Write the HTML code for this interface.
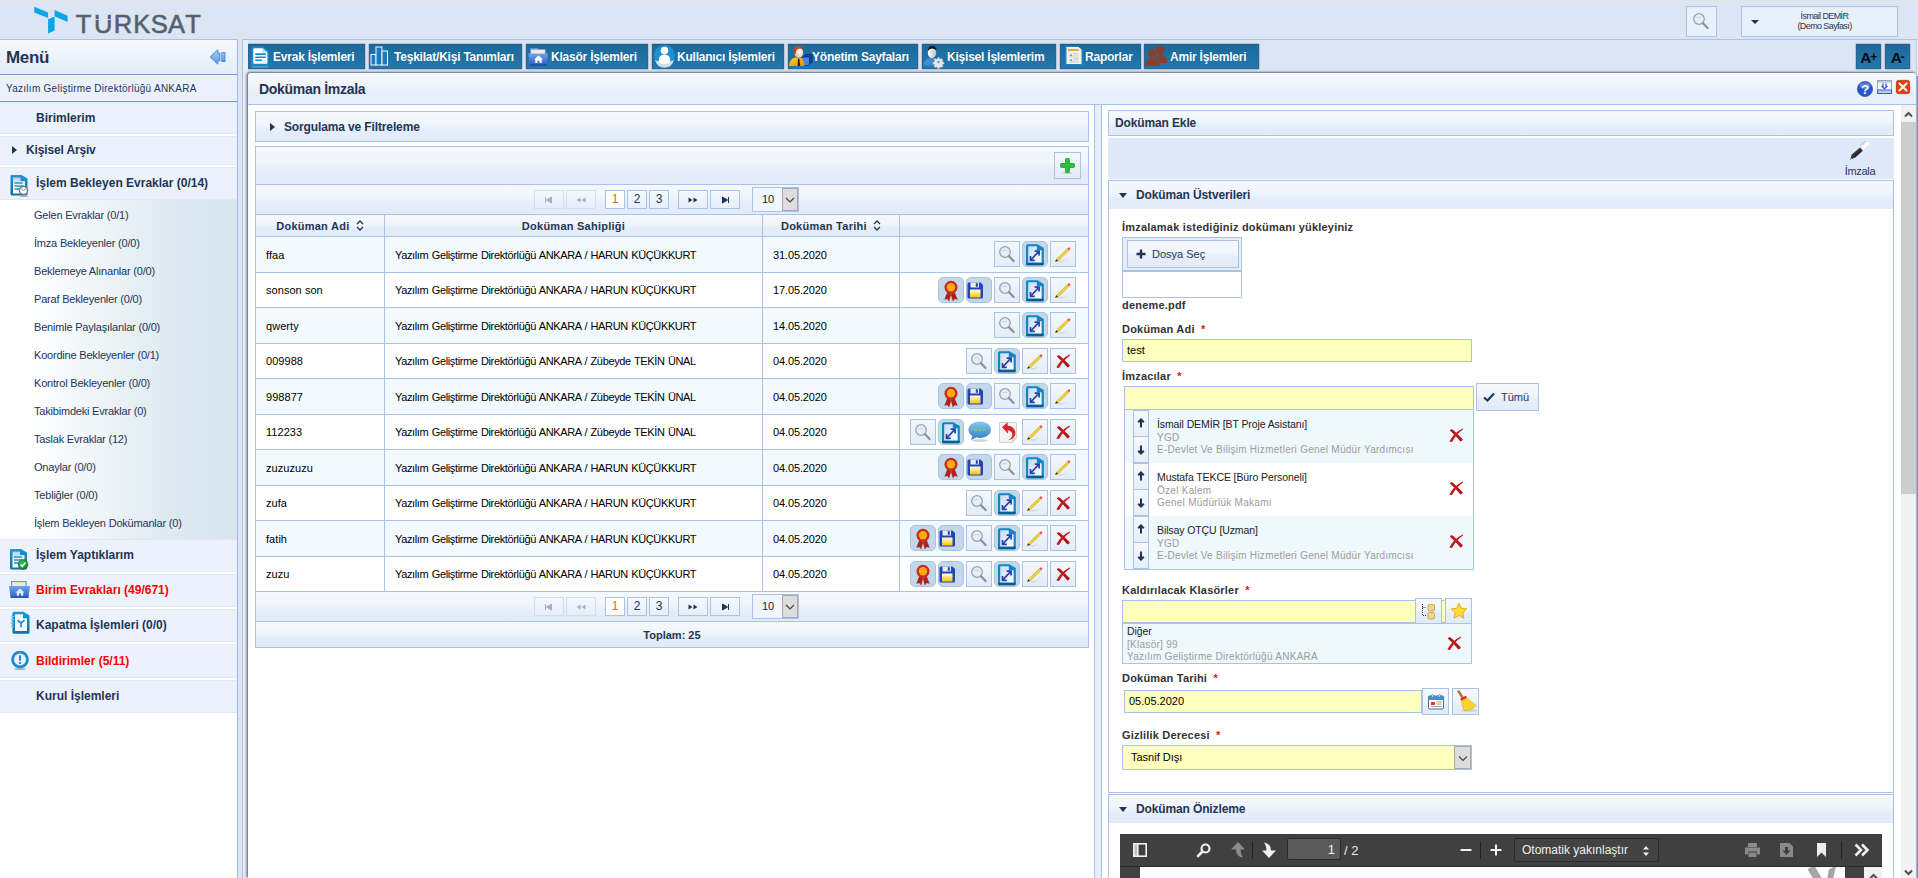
<!DOCTYPE html>
<html lang="tr">
<head>
<meta charset="utf-8">
<title>Doküman İmzala</title>
<style>

*{box-sizing:border-box;margin:0;padding:0}
html,body{width:1918px;height:878px;overflow:hidden;background:#dbe5f3;
 font-family:"Liberation Sans",Arial,sans-serif;font-size:11px;color:#000}
.abs{position:absolute}
svg{display:block;overflow:visible}
/* ---------- top header ---------- */
#top{position:absolute;left:0;top:0;width:1918px;height:40px;background:#dbe5f3;border-top:1px solid #e3e3e3}
#logo{position:absolute;left:33px;top:4px}
#logotxt{position:absolute;left:73.750px;top:8px;font-size:25.500px;color:#53616e;line-height:30px;font-weight:400;white-space:nowrap;-webkit-text-stroke:.55px #53616e}
#logotxt span{display:inline-block;text-align:center}
#srch{position:absolute;left:1686px;top:5px;width:31px;height:31px;border:1px solid #a9c3e6;background:#e8f0fa}
#usr{position:absolute;left:1741px;top:5px;width:157px;height:31px;border:1px solid #a9c3e6;background:#e8f0fa;
 font-size:9px;line-height:10px;text-align:center;color:#1f3556;padding:4px 0 0 10px;letter-spacing:-.6px}
#usr:before{content:"";position:absolute;left:9px;top:13px;border:4px solid transparent;border-top:4px solid #1f3556}
/* ---------- sidebar ---------- */
#side{position:absolute;left:0;top:39px;width:238px;height:839px;background:#fff;border-right:1px solid #9dbbe2;border-top:1px solid #a9c3e6}
#side .hd{height:35px;background:linear-gradient(#f5f8fc,#eef4fb 40%,#e4ecf8);border-bottom:1px solid #6f9cd9;
 font-weight:bold;font-size:17px;line-height:35px;padding-left:6px;letter-spacing:-.3px;color:#1f3556;position:relative}
#side .unit{height:27px;background:#eaf1fb;border-bottom:1px solid #6f9cd9;font-size:10px;line-height:27px;padding-left:6px;color:#1f3556;letter-spacing:.27px}
.acc{position:absolute;left:0;width:237px;height:33px;background:#ebf2fc;font-weight:bold;font-size:12px;line-height:31px;color:#1f3556;
 padding-left:36px;border-top:1px solid #e4e6f4;border-bottom:1px solid #e4e6f4;white-space:nowrap}
.acc.red{color:#f00}
.acc svg{position:absolute;left:8px;top:6px}
#sub{position:absolute;left:0;top:160px;width:237px;height:339px;background:linear-gradient(90deg,#fff 12%,#dbe8ef 78%,#d7e5ed)}
#sub div{position:absolute;left:34px;font-size:11px;color:#1f3556;line-height:14px;white-space:nowrap;letter-spacing:-.2px}
#split1{position:absolute;left:238px;top:39px;width:5px;height:839px;background:#dbe5f3;border-right:1px solid #a9c3e6}
#gap1{position:absolute;left:243px;top:39px;width:5px;height:839px;background:#e9f0fa;border-top:1px solid #a9c3e6}
/* ---------- menubar ---------- */
#mbar{position:absolute;left:243px;top:39px;width:1674px;height:34px;background:#dbe5f3;border-top:1px solid #a9c3e6;border-left:1px solid #e9f0fa}
.mb{position:absolute;top:44px;height:25px;background:linear-gradient(#1d6999,#2278ae);border:1px solid #2b6592;border-top-color:#265a84;box-shadow:0 0 1.500px rgba(50,70,100,.75);text-shadow:0 0 1px rgba(0,20,40,.3);color:#fff;font-weight:bold;font-size:12px;
 line-height:24px;white-space:nowrap;letter-spacing:-.22px}
.mb svg{position:absolute;left:-1px;top:-1px}
.mb span{position:absolute;top:0}
/* ---------- main panel ---------- */
#panel{position:absolute;left:248px;top:73px;width:1669px;height:805px;border-right:1px solid #9ab3da;background:#fff;border-radius:3px 4px 0 0;box-shadow:-1px -1px 2px rgba(60,75,100,.7),-2px 0 3px rgba(60,75,100,.35)}
#ptitle{position:absolute;left:0;top:0;width:100%;height:32px;background:linear-gradient(#f4f8fc,#f0f5fb 40%,#e6eef9 64%,#e9f0fa);border-bottom:1px solid #a9c3e6;
 font-weight:bold;font-size:14px;line-height:32px;padding-left:11px;color:#1f3556;letter-spacing:-.3px;border-radius:3px 4px 0 0}
.bx{position:absolute;border:1px solid #a9c3e6}
.grad{background:linear-gradient(#f5f8fc,#f1f6fc 40%,#e4edf9 64%,#e2ecf8)}
.b12{font-weight:bold;font-size:12px;color:#1f3556;letter-spacing:-.13px}

.tri-r{position:absolute;border:4px solid transparent;border-left:5px solid #1f3556;width:0;height:0}
.tri-d{position:absolute;border:4px solid transparent;border-top:5px solid #1f3556;width:0;height:0}
.ab{display:inline-block;width:26px;height:26px;border:1px solid #a9c3e6;background:linear-gradient(#f4f8fd,#e3ecf8);margin-left:2px;vertical-align:top}
.ab svg{margin:-1px 0 0 -1px}
.ab.dk{background:#c3d7e8;border-radius:5px;border-color:#a9c3e6}
.ab.no{background:none;border-color:transparent}
.pg{position:absolute;left:7px;width:834px;height:31px;border:1px solid #a9c3e6;background:linear-gradient(#f5f8fc,#f1f6fc 40%,#e4edf9 64%,#e2ecf8)}
.pb{position:absolute;top:5px;height:19px;border:1px solid #a9c3e6;background:linear-gradient(#f6f9fd,#e6eef9);text-align:center;font-size:12px;line-height:17px;color:#1f3556}
.pb.dis{border-color:#c9d9ee;opacity:.75}
.pb.cur{color:#e17009;background:#fff}
.psel{position:absolute;left:496px;top:2px;width:47px;height:25px;border:1px solid #a9c3e6;background:#f1f6fc;font-size:11px;line-height:23px;padding-left:9px;color:#222}
.psel i{position:absolute;right:0;top:0;width:16px;height:23px;background:#ddd;border:1px solid #a8a8a8}
.psel i svg{margin:1px 0 0 0}
.th{position:absolute;left:7px;width:834px;height:23px;border:1px solid #a9c3e6;background:linear-gradient(#f5f8fc,#f1f6fc 40%,#e4edf9 64%,#e2ecf8);font-weight:bold;font-size:11px;color:#1f3556;letter-spacing:.25px;text-align:center;line-height:23px}
.th div,.tr div{position:absolute;top:0;height:100%;border-right:1px solid #a9c3e6;white-space:nowrap}
.c1{left:0;width:129px}.c2{left:129px;width:378px}.c3{left:507px;width:137px}.c4{left:644px;width:188px;border-right:0 !important}
.srt{display:inline-block;vertical-align:-1px;margin-left:3px}
.tr{position:absolute;left:7px;width:834px;border:1px solid #a9c3e6;border-top:0;font-size:11px;color:#000;line-height:35px;letter-spacing:-.28px}
.tr.odd{background:#f2fafd}.tr.even{background:#fff}
.tr .c1,.tr .c2,.tr .c3{padding-left:10px}
.tr .c4{text-align:right;padding:4px 12px 0 0;line-height:0}
.tr .c3{letter-spacing:-.12px}
.tr .c1{letter-spacing:.05px}
.tr .c2{letter-spacing:-.36px;word-spacing:.65px}
.tot{font-weight:bold;font-size:11px;color:#1f3556;text-align:center;line-height:27px}
#split2{position:absolute;left:846px;top:32px;width:8px;height:773px;background:#e6eefa;border-left:1px solid #a9c3e6;border-right:1px solid #a9c3e6}

.lb{position:absolute;font-weight:bold;font-size:11px;color:#333;letter-spacing:.2px;line-height:14px;white-space:nowrap}
.st{color:#e8101a;font-weight:bold;margin-left:3px}
.inp{position:absolute;border:1px solid #a9c3e6;background:#ffffc0;font-size:11px;line-height:21px;padding-left:4px;color:#000;white-space:nowrap}
.dd{position:absolute;right:0;top:0;width:17px;height:23px;background:#ddd;border:1px solid #a8a8a8}
.dd svg{margin:1px 0 0 1px}
.sg{position:absolute;left:1125px;width:348px;height:53px}
.ud{position:absolute;left:8px;width:16px;height:27px;border:1px solid #a9c3e6;background:linear-gradient(#f6f9fd,#e6eef9)}
.n1,.n2,.n3{position:absolute;left:32px;white-space:nowrap;font-size:10px;line-height:13px}
.n1{top:8px;color:#222;font-size:10.500px;letter-spacing:-.1px}
.n2{top:21px;color:#9c9c9c;letter-spacing:.28px}
.n3{top:33px;color:#9c9c9c;letter-spacing:.28px}
.rx{position:absolute;left:323px;top:17px}
#pdf{position:absolute;left:1120px;top:834px;width:762px;height:44px;overflow:hidden}
#pdft{position:absolute;left:0;top:0;width:762px;height:33px;background:#404040;border-bottom:1px solid #2a2a2a;font-family:"Liberation Sans","DejaVu Sans",sans-serif}
#sb{position:absolute;left:1901px;top:105px;width:15px;height:773px;background:#f1f1f1}

.mb.ap{text-align:center;font-size:15.500px;color:#050a10;letter-spacing:-.5px;text-shadow:none;line-height:24px;transform-origin:50% 50%}
.mb.ap small{font-size:12px;vertical-align:2px;margin-left:-.5px}

</style>
</head>
<body>

<svg width="0" height="0" style="position:absolute">
<defs>
<linearGradient id="gBlue" x1="0" y1="0" x2="0" y2="1"><stop offset="0" stop-color="#7fb6ea"/><stop offset="1" stop-color="#2a6fc4"/></linearGradient>
<linearGradient id="gPaper" x1="0" y1="0" x2="1" y2="1"><stop offset="0" stop-color="#c9daf2"/><stop offset="1" stop-color="#ffffff"/></linearGradient>
<linearGradient id="gYel" x1="0" y1="0" x2="0" y2="1"><stop offset="0" stop-color="#fffbe0"/><stop offset="1" stop-color="#f7c600"/></linearGradient>
<linearGradient id="gBub" x1="0" y1="0" x2="0" y2="1"><stop offset="0" stop-color="#8cc6ee"/><stop offset="1" stop-color="#2c7fc0"/></linearGradient>
<symbol id="i-mag" viewBox="0 0 26 26"><circle cx="11" cy="11" r="5.3" fill="#e3eef9" stroke="#9aa2ab" stroke-width="1.3"/><path d="M8.2 9.6h4.6" stroke="#c9d3de" stroke-width="1"/><path d="M15 15.2l4.6 4.8" stroke="#8a9097" stroke-width="2.2" stroke-linecap="round"/></symbol>
<symbol id="i-exp" viewBox="0 0 26 26"><path d="M4 4.800Q4 3.300 5.500 3.300H15.500l6.300 3.700V22.700Q21.800 24.300 20.200 24.300H5.600Q4 24.300 4 22.700z" fill="#0f86c6"/><path d="M4 21.800h17.800v.9q0 1.600-1.600 1.600H5.600Q4 24.300 4 22.700z" fill="#0a5f92"/><path d="M6.200 5.300h8.600v3.900h4.800V21.500H6.200z" fill="url(#gPaper)"/><path d="M8.800 19l8-8.600M8.500 15V19.300h4.300M12.600 10.100h4.500v4.500" fill="none" stroke="#2e3fa8" stroke-width="1.700"/></symbol>
<symbol id="i-pen" viewBox="0 0 26 26"><path d="M6 21l12-2.2-7 3.2z" fill="#cfd6de" opacity=".8"/><path d="M5.2 20.6l1.3-2.4L17.4 7.6l1.7 1.7L8 20z" fill="#f2d23c" stroke="#c9a51c" stroke-width=".6"/><path d="M17.4 7.6l1-1q.9-.5 1.6.2t.2 1.500l-1.100 1z" fill="#ee4a5a"/><path d="M5.200 20.600l1.300-2.400 1.5 1.800z" fill="#222"/></symbol>
<symbol id="i-x" viewBox="0 0 26 26"><path d="M6.800 8.600Q8.200 6.600 10 7.800L19.800 17.200Q19.600 19 17.400 19.600Q12.500 13.500 6.800 8.600z" fill="#b5161b"/><path d="M19.600 6.400Q20.400 6.800 20 7.600Q13.500 12 9.200 19.800Q7.600 20.200 6.400 19.200Q10.500 11 19.600 6.400z" fill="#c01c22"/></symbol>
<symbol id="i-ros" viewBox="0 0 26 26"><path d="M9.600 14.500l-3.300 8.300 3-.8 1.800 2.500 2.200-7.500zM16.400 14.500l3.300 8.300-3-.8-1.800 2.500-2.200-7.500z" fill="#b0201f"/><circle cx="13" cy="10.300" r="6.500" fill="#c62a23"/><circle cx="13" cy="10.300" r="4.200" fill="#ffab0f"/></symbol>
<symbol id="i-sav" viewBox="0 0 26 26"><path d="M1.500 7q0-1.500 1.500-1.500h11.500l2.500 2.500V20q0 1.500-1.500 1.500H3q-1.500 0-1.500-1.500z" fill="#2443b8"/><rect x="4.500" y="5.500" width="8.500" height="5" fill="#e8ecf5"/><rect x="9.800" y="6.200" width="2" height="3.600" fill="#2443b8"/><rect x="4" y="12.500" width="10.500" height="8" fill="url(#gYel)"/></symbol>
<symbol id="i-bub" viewBox="0 0 26 26"><ellipse cx="14" cy="21.500" rx="8" ry="1.300" fill="#9aa4b0" opacity=".5"/><path d="M13.800 2.500c6.400 0 11.200 3.600 11.200 8.200s-4.800 8.200-11.200 8.200c-1.300 0-2.500-.1-3.600-.4L5 21l1.400-4C3.800 15.500 2.400 13.200 2.400 10.700 2.400 6.100 7.400 2.500 13.800 2.500z" fill="url(#gBub)"/><circle cx="9.500" cy="11" r="1.100" fill="#7ddc3a"/><circle cx="13.800" cy="11" r="1.100" fill="#7ddc3a"/><circle cx="18" cy="11" r="1.100" fill="#7ddc3a"/></symbol>
<symbol id="i-und" viewBox="0 0 26 26"><path d="M5.500 3.500h17v16l-4 4h-13z" fill="#f4f4f4" stroke="#c8c8c8" stroke-width=".8"/><path d="M18.500 23.500v-4h4" fill="#e0e0e0" stroke="#c8c8c8" stroke-width=".8"/><path d="M8 8.300l5.500-5 .3 3.400c5 .4 8.300 4 7.600 8.300-.5 3.200-3.400 5.500-7.400 6.300 3-1.600 4.600-3.800 4.300-6.200-.3-2.300-2-3.700-4.500-3.900l.3 3.600z" fill="#e0242c"/></symbol>
<symbol id="i-plus" viewBox="0 0 27 27"><ellipse cx="13.500" cy="21" rx="5" ry=".8" fill="#8a949e" opacity=".5"/><path d="M11.500 7.500q0-1 1-1h2q1 0 1 1v4h4q1 0 1 1v2q0 1-1 1h-4v4q0 1-1 1h-2q-1 0-1-1v-4h-4q-1 0-1-1v-2q0-1 1-1h4z" fill="#2fbf3a" stroke="#1e9a28" stroke-width=".8"/></symbol>

<linearGradient id="gFold" x1="0" y1="0" x2="0" y2="1"><stop offset="0" stop-color="#6fa4ee"/><stop offset="1" stop-color="#2c5fc8"/></linearGradient>
<linearGradient id="gHair" x1="0" y1="0" x2="1" y2="1"><stop offset="0" stop-color="#e05a18"/><stop offset="1" stop-color="#8a2a08"/></linearGradient>
<radialGradient id="gFace" cx=".6" cy=".4" r=".7"><stop offset="0" stop-color="#fff"/><stop offset="1" stop-color="#f1b48a"/></radialGradient>
<linearGradient id="gShirt" x1="0" y1="0" x2="1" y2="1"><stop offset="0" stop-color="#ffd21a"/><stop offset="1" stop-color="#e88a08"/></linearGradient>
<linearGradient id="gGrayP" x1="0" y1="0" x2="1" y2="0"><stop offset="0" stop-color="#fff"/><stop offset="1" stop-color="#b9c0c8"/></linearGradient>
<symbol id="m-doc" viewBox="0 0 25 25"><path d="M3.200 5q0-2.700 2.700-2.700h8.600l6.400 4.500V20q0 2.600-2.600 2.600H5.800q-2.600 0-2.600-2.600z" fill="#1a8fd2" opacity=".75"/><path d="M3.800 22.900h16.500" stroke="#9cc0da" stroke-width=".7"/><path d="M5.300 5.300q0-1 1-1h8.200l4.900 4.200v10.300q0 1-1 1H6.300q-1 0-1-1z" fill="#fff"/><path d="M14.500 4.300v4.200h4.900z" fill="#bfdcf0"/><path d="M7.200 10.100h10.600M7.200 13.200h10.600M7.200 16.200h6.800" stroke="#1a8fd2" stroke-width="1.600"/></symbol>
<symbol id="m-bar" viewBox="0 0 25 25"><rect x="2" y="10.500" width="5" height="10.500" fill="#1b79c2" stroke="#f4f8fc" stroke-width="1"/><rect x="7" y="3" width="6" height="18" fill="#1b79c2" stroke="#f4f8fc" stroke-width="1"/><rect x="13" y="7" width="5.500" height="14" fill="#1b79c2" stroke="#f4f8fc" stroke-width="1"/></symbol>
<symbol id="m-fold" viewBox="0 0 25 25"><path d="M4 4h8l1 1.500h6.500v6H4z" fill="#5b8fe6"/><rect x="5" y="5.800" width="14" height="7" fill="#f4f0e0" stroke="#c8c2a8" stroke-width=".5"/><path d="M2.300 9.500h19.700l-1.300 11.500H3.600z" fill="url(#gFold)"/><path d="M3.600 20.500h17.100l-.1.900H3.700z" fill="#1a3a8a"/><path d="M12.500 11.500l4.500 4h-1.300v3.500h-2.200v-2.500h-2v2.500H9.300v-3.500H8z" fill="#fff"/></symbol>
<symbol id="m-user" viewBox="0 0 25 25"><circle cx="12.500" cy="11.500" r="10.500" fill="#1e8fcf"/><path d="M3 16q9.500 6 19 0-2 7.500-9.500 7.800Q5 23.500 3 16z" fill="#e9f1f7" opacity=".85"/><circle cx="12.500" cy="6.500" r="3.800" fill="#fff"/><path d="M6.500 17.500q0-7 6-7t6 7q-1.500 2.500-6 2.500t-6-2.500z" fill="#fff"/></symbol>
<symbol id="m-mgr" viewBox="0 0 25 25"><rect x="16.500" y="10.500" width="7.500" height="8.500" rx="1" fill="#1d3fa8" stroke="#0c1f5a" stroke-width=".7"/><rect x="14" y="13" width="7.500" height="8.500" rx="1" fill="#3f86e8" stroke="#0c1f5a" stroke-width=".7"/><path d="M1 22q.5-7 6-8.500l6.500.5q2.500 1.500 3 8z" fill="url(#gShirt)"/><path d="M10 14.500l1.300 0 .9 7.500h-2.500z" fill="#2a1a08"/><ellipse cx="10.800" cy="8.500" rx="4.300" ry="5.300" fill="url(#gFace)"/><path d="M5.500 9q-.8-6.500 5-7 4.500-.2 5 3.500-3-1.500-5.500-.5-2.500 1-2.500 5.500z" fill="url(#gHair)"/></symbol>
<symbol id="m-pers" viewBox="0 0 25 25"><path d="M1.500 21.500q0-6 6-7.500h5q3 1 4 3.500l-2 4z" fill="#3a8fd0"/><ellipse cx="10" cy="8.500" rx="4.200" ry="5.500" fill="url(#gGrayP)"/><path d="M5.800 7q.2-5 4.400-5 4 0 4.300 4.500-2-2-4.500-2t-4.200 2.500z" fill="#111"/><g transform="translate(16.500,18)"><path d="M-1-5.500h2l.4 1.500 1.300.6 1.400-.8 1.400 1.400-.8 1.400.6 1.300 1.500.4v2l-1.500.4-.6 1.300.8 1.400-1.400 1.400-1.400-.8-1.300.6-.4 1.500h-2l-.4-1.500-1.300-.6-1.400.8-1.400-1.400.8-1.400-.6-1.300-1.500-.4v-2l1.500-.4.6-1.300-.8-1.400 1.400-1.400 1.400.8 1.300-.6z" fill="#e6e8ea" stroke="#a8acb2" stroke-width=".5" transform="scale(.82)"/><circle r="1.200" fill="#5a9ad8"/></g></symbol>
<symbol id="m-rep" viewBox="0 0 25 25"><path d="M5 2h13.500l4.500 3.500V21H5z" fill="#1a8fd2" opacity=".7"/><path d="M6.500 3h12l3 2.500V20h-15z" fill="#f3f1ec"/><rect x="8" y="5" width="10.500" height="2" fill="#f5a623"/><path d="M11 9.500l1.500 2.500h-3zM11 14.500l1.500 2.500h-3z" fill="#58a6e6"/><path d="M13.500 9.500h5M13.500 11h5M9 13h9.500M13.500 14.500h5M13.500 16h5M9 18h9.500" stroke="#c8c8c8" stroke-width=".8"/></symbol>
<symbol id="m-amir" viewBox="0 0 25 25"><circle cx="16" cy="6.500" r="4.500" fill="#8a3f2a"/><path d="M8.500 19q0-7.500 7.500-8 7.500.5 7.500 8z" fill="#8a3f2a"/><circle cx="8.500" cy="9.500" r="4.800" fill="#8a3f2a" stroke="#1f6fa4" stroke-width=".8"/><path d="M.5 22q0-8 8-8.500 8 .5 8 8.500z" fill="#8a3f2a" stroke="#1f6fa4" stroke-width=".8"/></symbol>

<linearGradient id="gDocB" x1="0" y1="0" x2="0" y2="1"><stop offset="0" stop-color="#1a96d6"/><stop offset="1" stop-color="#0f6fa8"/></linearGradient>
<linearGradient id="gPap2" x1="0" y1="0" x2="0" y2="1"><stop offset="0" stop-color="#b9cfe8"/><stop offset=".6" stop-color="#fff"/></linearGradient>
<radialGradient id="gGreen" cx=".4" cy=".35" r=".7"><stop offset="0" stop-color="#3cc05a"/><stop offset="1" stop-color="#0a7a2a"/></radialGradient>
<symbol id="s-doc" viewBox="0 0 24 26"><path d="M2 3q0-1 1-1h10l6 3.500V21q0 1.500-1.500 1.500H3.500Q2 22.500 2 21z" fill="url(#gDocB)"/><path d="M4.500 4.500h7.500v3.500h4.500V20.500H4.500z" fill="url(#gPap2)"/><path d="M6 10h8M6 13h9M6 16h6" stroke="#1a96d6" stroke-width="1.500"/></symbol>
<symbol id="s-wait" viewBox="0 0 24 26"><g transform="translate(0.5,-1)"><use href="#s-doc"/><ellipse cx="15.500" cy="23.300" rx="4.500" ry=".8" fill="#8a8f95" opacity=".6"/><circle cx="15" cy="17.500" r="4.800" fill="#6f7f88"/><circle cx="15" cy="17.500" r="3.300" fill="#fff"/><path d="M12.800 15.800l2.200 1.700 2.200-1.700" fill="none" stroke="#6f7f88" stroke-width="1"/></g></symbol>
<symbol id="s-done" viewBox="0 0 24 26"><use href="#s-doc"/><circle cx="15" cy="17.500" r="5" fill="url(#gGreen)" stroke="#0a6a22" stroke-width=".5"/><path d="M12.500 17.500l1.800 2 3.200-4" fill="none" stroke="#fff" stroke-width="1.500"/></symbol>
<symbol id="s-birim" viewBox="0 0 24 26"><g transform="translate(0,-5)"><path d="M3 4h15.500v8H3z" fill="#4f86e0"/><rect x="4" y="6" width="13.500" height="6" fill="#ece8dc" stroke="#c9c4b2" stroke-width=".5"/><path d="M1 10h21l-1.500 11.500H2.500z" fill="url(#gFold)"/><path d="M2.500 20.800h18.100l-.1 1H2.600z" fill="#1c3f8f"/><path d="M12 12.500l4.500 4h-1.300v3.300H13v-2.300h-2v2.300H8.800v-3.300H7.500z" fill="#dfe9fb"/></g></symbol>
<symbol id="s-kap" viewBox="0 0 24 26"><g transform="translate(1,-1.5) scale(1,1.08)"><path d="M3.500 3.500q0-1.500 1.500-1.500h9.500l6 3.500V21q0 1.500-1.500 1.500H5q-1.500 0-1.500-1.500z" fill="url(#gDocB)"/><path d="M6 4.500h8v3.500h4V20H6z" fill="#f4f8fc"/><path d="M2 6.500h3M2 9.500h3M2 12.500h3M2 15.500h3" stroke="#1a96d6" stroke-width="1.200"/><path d="M2 6.500h3M2 9.500h3M2 12.500h3M2 15.500h3" stroke="#fff" stroke-width=".5"/><path d="M8.500 10l3.500 2.500v4M12 12.500l3.500-2.500" fill="none" stroke="#1a8fd0" stroke-width="1.700"/></g></symbol>
<symbol id="s-bil" viewBox="0 0 24 26"><g transform="translate(0.5,-4)"><ellipse cx="11.500" cy="22" rx="6" ry="1" fill="#7d8790" opacity=".6"/><circle cx="11.500" cy="12.500" r="8.800" fill="#1a8fd0"/><circle cx="11.500" cy="12.500" r="6" fill="#e9f2fa"/><path d="M11.500 8.200v5.500" stroke="#1a7fc0" stroke-width="1.800"/><circle cx="11.500" cy="16.200" r="1.100" fill="#1a7fc0"/></g></symbol>
</defs>
</svg>


<div id="top">
 <svg id="logo" width="36" height="29" viewBox="33 5 36 29"><path d="M34.300 6.700L48.100 12.400V17.900L34.300 12.400zM48.100 19.200L54.600 16.600V30.400L48.100 33.500zM54.600 10.100L67.600 15.800V22.100L54.600 16.300z" fill="#0ba5e8"/></svg>
 <div id="logotxt"><span style="width:19.5px">T</span><span style="width:19.9px">Ü</span><span style="width:19.55px">R</span><span style="width:17.95px">K</span><span style="width:17.33px">S</span><span style="width:17.0px">A</span><span style="width:16.4px">T</span></div>
 <div class="abs" style="left:94px;top:5px;width:18px;height:8.300px;background:#dbe5f3"></div><div class="abs" style="left:94px;top:18px;width:18px;height:1px;background:rgba(219,229,243,.75)"></div>
 <div id="srch"><svg width="28" height="28"><use href="#i-mag" transform="translate(1,1)" width="26" height="26"/></svg></div>
 <div id="usr">İsmail DEMİR<br>(Demo Sayfası)</div>
</div>
<div id="mbar"></div><div class="abs" style="left:1916px;top:40px;width:1px;height:33px;background:#b4cbea"></div><div class="abs" style="left:1917px;top:40px;width:1px;height:36px;background:#e8eef8"></div><div class="abs" style="left:1917px;top:76px;width:1px;height:802px;background:#7a96c0"></div>
<div class="mb" style="left:248px;width:117px"><svg width="25" height="25"><use href="#m-doc" width="25" height="25"/></svg><span style="left:24px">Evrak İşlemleri</span></div><div class="mb" style="left:369px;width:153px"><svg width="25" height="25"><use href="#m-bar" width="25" height="25"/></svg><span style="left:24px">Teşkilat/Kişi Tanımları</span></div><div class="mb" style="left:526px;width:122px"><svg width="25" height="25"><use href="#m-fold" width="25" height="25"/></svg><span style="left:24px">Klasör İşlemleri</span></div><div class="mb" style="left:652px;width:132px"><svg width="25" height="25"><use href="#m-user" width="25" height="25"/></svg><span style="left:24px">Kullanıcı İşlemleri</span></div><div class="mb" style="left:788px;width:130px"><svg width="25" height="25"><use href="#m-mgr" width="25" height="25"/></svg><span style="left:23px">Yönetim Sayfaları</span></div><div class="mb" style="left:922px;width:134px"><svg width="25" height="25"><use href="#m-pers" width="25" height="25"/></svg><span style="left:24px">Kişisel İşlemlerim</span></div><div class="mb" style="left:1060px;width:81px"><svg width="25" height="25"><use href="#m-rep" width="25" height="25"/></svg><span style="left:24px">Raporlar</span></div><div class="mb" style="left:1144px;width:115px"><svg width="25" height="25"><use href="#m-amir" width="25" height="25"/></svg><span style="left:25px">Amir İşlemleri</span></div>
<div class="mb ap" style="left:1856px;width:25px">A<small>+</small></div>
<div class="mb ap" style="left:1885px;width:25px">A<small>-</small></div>


<div id="side">
 <div class="hd">Menü<svg class="abs" style="left:209px;top:8px" width="18" height="18" viewBox="0 0 18 18"><defs><linearGradient id="gCol" x1="0" y1="0" x2="0" y2="1"><stop offset="0" stop-color="#a4d0f2"/><stop offset="1" stop-color="#5a9be0"/></linearGradient></defs><path d="M1.200 9l7.600-7.200v3.300h2v7.800h-2v3.300z" fill="url(#gCol)" stroke="#3a7fd8" stroke-width=".9"/><rect x="12.800" y="4.700" width="3.200" height="8.800" fill="url(#gCol)" stroke="#3a7fd8" stroke-width=".9"/></svg></div>
 <div class="unit">Yazılım Geliştirme Direktörlüğü ANKARA</div>
 <div class="acc" style="top:62px;height:32px;line-height:30px">Birimlerim</div>
 <div class="acc" style="top:96px;height:29px;padding-left:26px;line-height:27px;letter-spacing:-.15px"><i class="tri-r" style="left:12px;top:9px"></i>Kişisel Arşiv</div>
 <div class="acc" style="top:127px;height:33px;line-height:31px"><svg width="24" height="26"><use href="#s-wait" width="24" height="26"/></svg>İşlem Bekleyen Evraklar (0/14)</div>
 <div id="sub"><div style="top:8px">Gelen Evraklar (0/1)</div><div style="top:36px">İmza Bekleyenler (0/0)</div><div style="top:64px">Beklemeye Alınanlar (0/0)</div><div style="top:92px">Paraf Bekleyenler (0/0)</div><div style="top:120px">Benimle Paylaşılanlar (0/0)</div><div style="top:148px">Koordine Bekleyenler (0/1)</div><div style="top:176px">Kontrol Bekleyenler (0/0)</div><div style="top:204px">Takibimdeki Evraklar (0)</div><div style="top:232px">Taslak Evraklar (12)</div><div style="top:260px">Onaylar (0/0)</div><div style="top:288px">Tebliğler (0/0)</div><div style="top:316px">İşlem Bekleyen Dokümanlar (0)</div></div>
 <div class="acc" style="top:499px;height:33px;line-height:31px"><svg style="top:7px" width="24" height="26"><use href="#s-done" width="24" height="26"/></svg>İşlem Yaptıklarım</div>
 <div class="acc red" style="top:534px;height:33px"><svg width="24" height="26"><use href="#s-birim" width="24" height="26"/></svg>Birim Evrakları (49/671)</div>
 <div class="acc" style="top:569px;height:33px"><svg style="top:1px" width="24" height="26"><use href="#s-kap" width="24" height="26"/></svg>Kapatma İşlemleri (0/0)</div>
 <div class="acc red" style="top:604px;height:34px;line-height:33px"><svg width="24" height="26"><use href="#s-bil" width="24" height="26"/></svg>Bildirimler (5/11)</div>
 <div class="acc" style="top:640px;height:33px;line-height:30px">Kurul İşlemleri</div>
</div>
<div id="split1"></div><div id="gap1"></div>


<div id="panel">
 <div id="ptitle">Doküman İmzala</div>
 <div id="picons">
  <svg class="abs" style="left:1609px;top:8px" width="16" height="16" viewBox="0 0 16 16"><circle cx="8" cy="8" r="7.600" fill="#2756cc" stroke="#1c3f9e" stroke-width=".6"/><ellipse cx="8" cy="4.800" rx="5.500" ry="3.300" fill="#7fa6f2" opacity=".55"/><text x="8" y="13" text-anchor="middle" font-family="Liberation Sans,Arial,sans-serif" font-weight="bold" font-size="13.500" fill="#fff">?</text></svg>
  <svg class="abs" style="left:1629px;top:7px" width="15" height="14" viewBox="0 0 15 14"><rect x=".5" y=".5" width="14" height="13" fill="#f4f7fc" stroke="#9aa4b8"/><rect x="1" y="1" width="13" height="2" fill="#c9cfd8"/><rect x=".5" y="10" width="14" height="3.500" fill="#b9c8f4" stroke="#2f55d0" stroke-width=".9"/><path d="M6 3.500v3M9 3.500v3M4.500 6l3 2.800 3-2.800" stroke="#2f55d0" fill="none" stroke-width="1.200"/></svg>
  <svg class="abs" style="left:1648px;top:7px" width="14" height="14" viewBox="0 0 14 14"><rect x=".4" y=".4" width="13.200" height="13.200" rx="2.200" fill="#e23c14" stroke="#b32c0c" stroke-width=".8"/><path d="M3.500 3.500l7 7M10.500 3.500l-7 7" stroke="#f3f0d4" stroke-width="2.300" stroke-linecap="round"/></svg>
 </div>
 <!-- left column -->
 <div class="bx grad" style="left:7px;top:38px;width:834px;height:31px">
   <i class="tri-r" style="left:14px;top:11px"></i><span class="abs b12" style="left:28px;top:8px">Sorgulama ve Filtreleme</span>
 </div>
 <div class="bx grad" style="left:7px;top:73px;width:834px;height:39px">
   <span class="ab" style="position:absolute;left:796px;top:5px;width:27px;height:27px"><svg width="27" height="27"><use href="#i-plus" width="27" height="27"/></svg></span>
 </div>
 <div class="pg" style="top:111px">
 <span class="pb dis" style="left:278px;width:30px"><svg width="28" height="17" viewBox="0 0 27 17"><path d="M10 6v6M16 6v6l-5-3z" stroke="#8f9bb0" fill="#8f9bb0" stroke-width="1"/></svg></span>
 <span class="pb dis" style="left:310px;width:30px"><svg width="28" height="17" viewBox="0 0 27 17"><path d="M13 6.500v5l-4-2.500zM18 6.500v5l-4-2.500z" fill="#8f9bb0"/></svg></span>
 <span class="pb cur" style="left:349px;width:20px">1</span>
 <span class="pb" style="left:371px;width:20px">2</span>
 <span class="pb" style="left:393px;width:20px">3</span>
 <span class="pb" style="left:422px;width:30px"><svg width="28" height="17" viewBox="0 0 27 17"><path d="M9 6.500v5l4-2.500zM14 6.500v5l4-2.500z" fill="#1f3556"/></svg></span>
 <span class="pb" style="left:454px;width:30px"><svg width="28" height="17" viewBox="0 0 27 17"><path d="M17 6v6M11 6v6l5-3z" stroke="#1f3556" fill="#1f3556" stroke-width="1"/></svg></span>
 <span class="psel">10<i><svg width="14" height="20" viewBox="0 0 14 20"><path d="M3 8l4 4 4-4" fill="none" stroke="#444" stroke-width="1.200"/></svg></i></span>
</div>
 <div class="th" style="top:141px">
  <div class="c1">Doküman Adi <svg class="srt" width="8" height="11" viewBox="0 0 8 11"><path d="M1 4l3-3 3 3M1 7l3 3 3-3" fill="none" stroke="#1f3556" stroke-width="1.300"/></svg></div>
  <div class="c2">Doküman Sahipliği</div>
  <div class="c3">Doküman Tarihi <svg class="srt" width="8" height="11" viewBox="0 0 8 11"><path d="M1 4l3-3 3 3M1 7l3 3 3-3" fill="none" stroke="#1f3556" stroke-width="1.300"/></svg></div>
  <div class="c4"></div>
 </div>
 <div class="tr odd" style="top:164px;height:36px;line-height:37px"><div class="c1">ffaa</div><div class="c2">Yazılım Geliştirme Direktörlüğü ANKARA / HARUN KÜÇÜKKURT</div><div class="c3">31.05.2020</div><div class="c4"><span class="ab"><svg width="26" height="26"><use href="#i-mag"/></svg></span><span class="ab dk"><svg width="26" height="26"><use href="#i-exp"/></svg></span><span class="ab"><svg width="26" height="26"><use href="#i-pen"/></svg></span></div></div><div class="tr even" style="top:200px;height:35px;line-height:35px"><div class="c1">sonson son</div><div class="c2">Yazılım Geliştirme Direktörlüğü ANKARA / HARUN KÜÇÜKKURT</div><div class="c3">17.05.2020</div><div class="c4"><span class="ab dk"><svg width="26" height="26"><use href="#i-ros"/></svg></span><span class="ab dk"><svg width="26" height="26"><use href="#i-sav"/></svg></span><span class="ab"><svg width="26" height="26"><use href="#i-mag"/></svg></span><span class="ab dk"><svg width="26" height="26"><use href="#i-exp"/></svg></span><span class="ab"><svg width="26" height="26"><use href="#i-pen"/></svg></span></div></div><div class="tr odd" style="top:235px;height:36px;line-height:37px"><div class="c1">qwerty</div><div class="c2">Yazılım Geliştirme Direktörlüğü ANKARA / HARUN KÜÇÜKKURT</div><div class="c3">14.05.2020</div><div class="c4"><span class="ab"><svg width="26" height="26"><use href="#i-mag"/></svg></span><span class="ab dk"><svg width="26" height="26"><use href="#i-exp"/></svg></span><span class="ab"><svg width="26" height="26"><use href="#i-pen"/></svg></span></div></div><div class="tr even" style="top:271px;height:35px;line-height:35px"><div class="c1">009988</div><div class="c2">Yazılım Geliştirme Direktörlüğü ANKARA / Zübeyde TEKİN ÜNAL</div><div class="c3">04.05.2020</div><div class="c4"><span class="ab"><svg width="26" height="26"><use href="#i-mag"/></svg></span><span class="ab dk"><svg width="26" height="26"><use href="#i-exp"/></svg></span><span class="ab"><svg width="26" height="26"><use href="#i-pen"/></svg></span><span class="ab"><svg width="26" height="26"><use href="#i-x"/></svg></span></div></div><div class="tr odd" style="top:306px;height:36px;line-height:37px"><div class="c1">998877</div><div class="c2">Yazılım Geliştirme Direktörlüğü ANKARA / Zübeyde TEKİN ÜNAL</div><div class="c3">04.05.2020</div><div class="c4"><span class="ab dk"><svg width="26" height="26"><use href="#i-ros"/></svg></span><span class="ab dk"><svg width="26" height="26"><use href="#i-sav"/></svg></span><span class="ab"><svg width="26" height="26"><use href="#i-mag"/></svg></span><span class="ab dk"><svg width="26" height="26"><use href="#i-exp"/></svg></span><span class="ab"><svg width="26" height="26"><use href="#i-pen"/></svg></span></div></div><div class="tr even" style="top:342px;height:35px;line-height:35px"><div class="c1">112233</div><div class="c2">Yazılım Geliştirme Direktörlüğü ANKARA / Zübeyde TEKİN ÜNAL</div><div class="c3">04.05.2020</div><div class="c4"><span class="ab"><svg width="26" height="26"><use href="#i-mag"/></svg></span><span class="ab dk"><svg width="26" height="26"><use href="#i-exp"/></svg></span><span class="ab no"><svg width="26" height="26"><use href="#i-bub"/></svg></span><span class="ab no"><svg width="26" height="26"><use href="#i-und"/></svg></span><span class="ab"><svg width="26" height="26"><use href="#i-pen"/></svg></span><span class="ab"><svg width="26" height="26"><use href="#i-x"/></svg></span></div></div><div class="tr odd" style="top:377px;height:36px;line-height:37px"><div class="c1">zuzuzuzu</div><div class="c2">Yazılım Geliştirme Direktörlüğü ANKARA / HARUN KÜÇÜKKURT</div><div class="c3">04.05.2020</div><div class="c4"><span class="ab dk"><svg width="26" height="26"><use href="#i-ros"/></svg></span><span class="ab dk"><svg width="26" height="26"><use href="#i-sav"/></svg></span><span class="ab"><svg width="26" height="26"><use href="#i-mag"/></svg></span><span class="ab dk"><svg width="26" height="26"><use href="#i-exp"/></svg></span><span class="ab"><svg width="26" height="26"><use href="#i-pen"/></svg></span></div></div><div class="tr even" style="top:413px;height:35px;line-height:35px"><div class="c1">zufa</div><div class="c2">Yazılım Geliştirme Direktörlüğü ANKARA / HARUN KÜÇÜKKURT</div><div class="c3">04.05.2020</div><div class="c4"><span class="ab"><svg width="26" height="26"><use href="#i-mag"/></svg></span><span class="ab dk"><svg width="26" height="26"><use href="#i-exp"/></svg></span><span class="ab"><svg width="26" height="26"><use href="#i-pen"/></svg></span><span class="ab"><svg width="26" height="26"><use href="#i-x"/></svg></span></div></div><div class="tr odd" style="top:448px;height:36px;line-height:37px"><div class="c1">fatih</div><div class="c2">Yazılım Geliştirme Direktörlüğü ANKARA / HARUN KÜÇÜKKURT</div><div class="c3">04.05.2020</div><div class="c4"><span class="ab dk"><svg width="26" height="26"><use href="#i-ros"/></svg></span><span class="ab dk"><svg width="26" height="26"><use href="#i-sav"/></svg></span><span class="ab"><svg width="26" height="26"><use href="#i-mag"/></svg></span><span class="ab dk"><svg width="26" height="26"><use href="#i-exp"/></svg></span><span class="ab"><svg width="26" height="26"><use href="#i-pen"/></svg></span><span class="ab"><svg width="26" height="26"><use href="#i-x"/></svg></span></div></div><div class="tr even" style="top:484px;height:35px;line-height:35px"><div class="c1">zuzu</div><div class="c2">Yazılım Geliştirme Direktörlüğü ANKARA / HARUN KÜÇÜKKURT</div><div class="c3">04.05.2020</div><div class="c4"><span class="ab dk"><svg width="26" height="26"><use href="#i-ros"/></svg></span><span class="ab dk"><svg width="26" height="26"><use href="#i-sav"/></svg></span><span class="ab"><svg width="26" height="26"><use href="#i-mag"/></svg></span><span class="ab dk"><svg width="26" height="26"><use href="#i-exp"/></svg></span><span class="ab"><svg width="26" height="26"><use href="#i-pen"/></svg></span><span class="ab"><svg width="26" height="26"><use href="#i-x"/></svg></span></div></div>
 <div class="pg" style="top:518px">
 <span class="pb dis" style="left:278px;width:30px"><svg width="28" height="17" viewBox="0 0 27 17"><path d="M10 6v6M16 6v6l-5-3z" stroke="#8f9bb0" fill="#8f9bb0" stroke-width="1"/></svg></span>
 <span class="pb dis" style="left:310px;width:30px"><svg width="28" height="17" viewBox="0 0 27 17"><path d="M13 6.500v5l-4-2.500zM18 6.500v5l-4-2.500z" fill="#8f9bb0"/></svg></span>
 <span class="pb cur" style="left:349px;width:20px">1</span>
 <span class="pb" style="left:371px;width:20px">2</span>
 <span class="pb" style="left:393px;width:20px">3</span>
 <span class="pb" style="left:422px;width:30px"><svg width="28" height="17" viewBox="0 0 27 17"><path d="M9 6.500v5l4-2.500zM14 6.500v5l4-2.500z" fill="#1f3556"/></svg></span>
 <span class="pb" style="left:454px;width:30px"><svg width="28" height="17" viewBox="0 0 27 17"><path d="M17 6v6M11 6v6l5-3z" stroke="#1f3556" fill="#1f3556" stroke-width="1"/></svg></span>
 <span class="psel">10<i><svg width="14" height="20" viewBox="0 0 14 20"><path d="M3 8l4 4 4-4" fill="none" stroke="#444" stroke-width="1.200"/></svg></i></span>
</div>
 <div class="bx grad tot" style="left:7px;top:548px;width:834px;height:27px">Toplam: 25</div>
 <div id="split2"></div>
</div>


<div id="rp">
 <div class="bx grad b12" style="left:1108px;top:110px;width:786px;height:26px;line-height:24px;padding-left:6px">Doküman Ekle</div>
 <div class="abs" style="left:1108px;top:138px;width:786px;height:41px;background:#dfe9f9"></div>
 <svg class="abs" style="left:1848px;top:140px" width="24" height="22" viewBox="0 0 24 22"><defs><linearGradient id="gPenD" x1="0" y1="0" x2="1" y2="1"><stop offset="0" stop-color="#6a6a6a"/><stop offset=".5" stop-color="#2e2e2e"/><stop offset="1" stop-color="#1a1a1a"/></linearGradient></defs><path d="M12.300 5.800L17.300 1.200" stroke="#c4c9d0" stroke-width="1.300"/><path d="M11.900 7.600L18.300 1.600Q20.500 .1 21.900 1.800 23 3.600 21.300 5.100L14.900 10.800z" fill="#fbfbfb" stroke="#c9ced4" stroke-width=".5"/><path d="M2 19.800L3.800 14.500 11.900 7.600 14.900 10.800 7.300 17.500z" fill="url(#gPenD)"/><path d="M2 19.800l.8-2.200 1.400 1.300z" fill="#bbb"/></svg>
 <div class="abs" style="left:1838px;top:165px;width:44px;text-align:center;font-size:11px;color:#1f3556;letter-spacing:-.3px">İmzala</div>

 <div class="bx" style="left:1108px;top:180px;width:786px;height:613px;background:#fff"></div>
 <div class="abs grad b12" style="left:1109px;top:181px;width:784px;height:28px;line-height:29px;padding-left:27px"><i class="tri-d" style="left:10px;top:12px"></i>Doküman Üstverileri</div>

 <div class="lb" style="left:1122px;top:220px">İmzalamak istediğiniz dokümanı yükleyiniz</div>
 <div class="bx" style="left:1122px;top:237px;width:120px;height:61px;background:#fff"></div>
 <div class="bx" style="left:1122px;top:237px;width:120px;height:35px;background:#e4edf9;border-bottom:2px solid #a9c3e6"></div>
 <div class="bx grad" style="left:1127px;top:240px;width:112px;height:28px;font-size:11px;color:#1f3556;line-height:26px;padding-left:24px"><svg class="abs" style="left:8px;top:8px" width="10" height="10" viewBox="0 0 10 10"><path d="M5 .5v9M.5 5h9" stroke="#1f3556" stroke-width="2.400"/></svg>Dosya Seç</div>
 <div class="lb" style="left:1122px;top:298px">deneme.pdf</div>
 <div class="lb" style="left:1122px;top:322px">Doküman Adi <b class="st">*</b></div>
 <div class="inp" style="left:1122px;top:339px;width:350px;height:23px">test</div>
 <div class="lb" style="left:1122px;top:369px">İmzacılar <b class="st">*</b></div>
 <div class="inp" style="left:1124px;top:386px;width:350px;height:24px"></div>
 <div class="bx grad" style="left:1476px;top:383px;width:63px;height:28px;font-size:11px;color:#1f3556;line-height:26px;padding-left:24px"><svg class="abs" style="left:6px;top:8px" width="12" height="10" viewBox="0 0 12 10"><path d="M1 5.500l3.500 3L11 1.500" fill="none" stroke="#1f3556" stroke-width="2.200"/></svg>Tümü</div>
 <div class="bx" style="left:1124px;top:409px;width:350px;height:161px;background:#fff"></div>
 <div class="sg" style="top:410px;background:#eff8fd">
  <span class="ud" style="top:0"><svg width="14" height="24" viewBox="0 0 14 24"><path d="M7 16.500V9M4.200 11.300L7 8.500l2.800 2.800" fill="none" stroke="#1f3556" stroke-width="2"/></svg></span>
  <span class="ud" style="top:26px"><svg width="14" height="24" viewBox="0 0 14 24"><path d="M7 8.500V16M4.200 13.700L7 16.500l2.800-2.800" fill="none" stroke="#1f3556" stroke-width="2"/></svg></span>
  <div class="n1">İsmail DEMİR [BT Proje Asistanı]</div><div class="n2">YGD</div><div class="n3">E-Devlet Ve Bilişim Hizmetleri Genel Müdür Yardımcısı</div>
  <svg class="rx" width="16" height="16" viewBox="5 5 16 16"><use href="#i-x" width="26" height="26"/></svg>
 </div>
 <div class="sg" style="top:463px;background:#fff">
  <span class="ud" style="top:0"><svg width="14" height="24" viewBox="0 0 14 24"><path d="M7 16.500V9M4.200 11.300L7 8.500l2.800 2.800" fill="none" stroke="#1f3556" stroke-width="2"/></svg></span>
  <span class="ud" style="top:26px"><svg width="14" height="24" viewBox="0 0 14 24"><path d="M7 8.500V16M4.200 13.700L7 16.500l2.800-2.800" fill="none" stroke="#1f3556" stroke-width="2"/></svg></span>
  <div class="n1">Mustafa TEKCE [Büro Personeli]</div><div class="n2">Özel Kalem</div><div class="n3">Genel Müdürlük Makamı</div>
  <svg class="rx" width="16" height="16" viewBox="5 5 16 16"><use href="#i-x" width="26" height="26"/></svg>
 </div>
 <div class="sg" style="top:516px;background:#eff8fd">
  <span class="ud" style="top:0"><svg width="14" height="24" viewBox="0 0 14 24"><path d="M7 16.500V9M4.200 11.300L7 8.500l2.800 2.800" fill="none" stroke="#1f3556" stroke-width="2"/></svg></span>
  <span class="ud" style="top:26px"><svg width="14" height="24" viewBox="0 0 14 24"><path d="M7 8.500V16M4.200 13.700L7 16.500l2.800-2.800" fill="none" stroke="#1f3556" stroke-width="2"/></svg></span>
  <div class="n1">Bilsay OTÇU [Uzman]</div><div class="n2">YGD</div><div class="n3">E-Devlet Ve Bilişim Hizmetleri Genel Müdür Yardımcısı</div>
  <svg class="rx" width="16" height="16" viewBox="5 5 16 16"><use href="#i-x" width="26" height="26"/></svg>
 </div>

 <div class="lb" style="left:1122px;top:583px">Kaldırılacak Klasörler <b class="st">*</b></div>
 <div class="inp" style="left:1122px;top:600px;width:324px;height:23px"></div>
 <div class="bx grad" style="left:1415px;top:598px;width:27px;height:26px"><svg class="abs" style="left:5px;top:4px" width="16" height="18" viewBox="0 0 16 18"><path d="M1.500 1v11.500h4M1.500 4.500h4" fill="none" stroke="#333" stroke-width="1" stroke-dasharray="1 1"/><rect x="7" y="1.500" width="6.500" height="6.500" rx="1.200" fill="#f2d486" stroke="#c19a3c" stroke-width=".8"/><rect x="7" y="9.500" width="6.500" height="6.500" rx="1.200" fill="#f2d486" stroke="#c19a3c" stroke-width=".8"/><circle cx="12.500" cy="6.500" r=".8" fill="#9fd0f0"/><circle cx="12.500" cy="14.500" r=".8" fill="#9fd0f0"/></svg></div>
 <div class="bx grad" style="left:1445px;top:598px;width:27px;height:26px"><svg class="abs" style="left:4px;top:3px" width="18" height="18" viewBox="0 0 18 18"><path d="M9 1.200l2.400 5 5.400.7-4 3.800 1 5.400L9 13.500l-4.800 2.600 1-5.400-4-3.800 5.400-.7z" fill="#ffd83a" stroke="#e0a800" stroke-width=".9"/></svg></div>
 <div class="bx" style="left:1122px;top:623px;width:350px;height:41px;background:#eff8fd">
   <div class="n1" style="left:4px;top:1px">Diğer</div><div class="n2" style="left:4px;top:14px">[Klasör] 99</div><div class="n3" style="left:4px;top:26px">Yazılım Geliştirme Direktörlüğü ANKARA</div>
   <svg class="rx" style="left:323px;top:11px" width="16" height="16" viewBox="5 5 16 16"><use href="#i-x" width="26" height="26"/></svg>
 </div>
 <div class="lb" style="left:1122px;top:671px">Doküman Tarihi <b class="st">*</b></div>
 <div class="inp" style="left:1124px;top:690px;width:298px;height:23px">05.05.2020</div>
 <div class="bx grad" style="left:1422px;top:688px;width:27px;height:27px"><svg class="abs" style="left:4px;top:4px" width="18" height="18" viewBox="0 0 18 18"><rect x="1.500" y="3" width="15" height="13" rx="1" fill="#fff" stroke="#4a5a70" stroke-width=".9"/><rect x="1.500" y="3" width="15" height="4" fill="#3d8fe0"/><circle cx="5.500" cy="3" r="1.300" fill="#dfe7f0" stroke="#4a5a70" stroke-width=".6"/><circle cx="12.500" cy="3" r="1.300" fill="#dfe7f0" stroke="#4a5a70" stroke-width=".6"/><rect x="4" y="9" width="4" height="3" fill="#e33"/><path d="M9.500 9h5M9.500 11h5M4 13.500h10.500" stroke="#9aa4b2" stroke-width="1"/></svg></div>
 <div class="bx grad" style="left:1452px;top:688px;width:27px;height:27px"><svg class="abs" style="left:2px;top:1px" width="24" height="24" viewBox="0 0 24 24"><ellipse cx="14" cy="20.500" rx="8" ry="1.500" fill="#9aa4b0" opacity=".35"/><path d="M2 1.200L4.200 0 9 7.600 6.800 8.800z" fill="#b5762c"/><path d="M5.200 8.800L10.800 5.800 12 8 6.400 11z" fill="#d9272e"/><path d="M6.400 11L12 8l9 7.500Q17 20.500 9 20.500 7.500 16 6.400 11z" fill="#f6d32d" stroke="#dcae10" stroke-width=".6"/></svg></div>
 <div class="lb" style="left:1122px;top:728px">Gizlilik Derecesi <b class="st">*</b></div>
 <div class="inp" style="left:1122px;top:745px;width:350px;height:25px;padding-left:8px;line-height:23px">Tasnif Dışı<i class="dd"><svg width="14" height="20" viewBox="0 0 14 20"><path d="M3 8.500l4 4 4-4" fill="none" stroke="#444" stroke-width="1.200"/></svg></i></div>

 <div class="bx" style="left:1108px;top:794px;width:786px;height:90px;background:#fff"></div>
 <div class="abs grad b12" style="left:1109px;top:795px;width:784px;height:28px;line-height:29px;padding-left:27px"><i class="tri-d" style="left:10px;top:12px"></i>Doküman Önizleme</div>
 <div id="pdf">
   <div id="pdft">
    <svg class="abs" style="left:12px;top:8px" width="16" height="16" viewBox="0 0 16 16"><rect x="1" y="1" width="5" height="14" fill="#bdbdbd"/><rect x="1.800" y="1.800" width="12.400" height="12.400" fill="none" stroke="#f0f0f0" stroke-width="1.600"/><path d="M5.800 1.500v13" stroke="#f0f0f0" stroke-width="1.600"/></svg>
    <svg class="abs" style="left:76px;top:8px" width="16" height="16" viewBox="0 0 16 16"><circle cx="9.500" cy="6.500" r="4" fill="none" stroke="#f0f0f0" stroke-width="2.200"/><path d="M6.500 9.500L2 14" stroke="#f0f0f0" stroke-width="2.600" stroke-linecap="round"/></svg>
    <svg class="abs" style="left:109px;top:7px" width="18" height="18" viewBox="0 0 18 18"><path d="M9 1l7 7.500h-4.500q0 5 2.500 8-7-1-7-8H2z" fill="#8d8d8d"/></svg>
    <i class="abs" style="left:132px;top:8px;width:1px;height:17px;background:#222"></i>
    <svg class="abs" style="left:140px;top:7px" width="18" height="18" viewBox="0 0 18 18"><path d="M9 17l-7-7.500h4.500q0-5-2.500-8 7 1 7 8H16z" fill="#f0f0f0"/></svg>
    <div class="abs" style="left:167px;top:4px;width:54px;height:22px;border:1px solid #2a2a2a;border-radius:2px;background:#5a5a5a;color:#f0f0f0;font-size:13px;line-height:21px;text-align:right;padding-right:5px">1</div>
    <div class="abs" style="left:224px;top:8px;color:#e8e8e8;font-size:13px;line-height:17px">/ 2</div>
    <svg class="abs" style="left:338px;top:8px" width="16" height="16" viewBox="0 0 16 16"><path d="M2.500 8h11" stroke="#f0f0f0" stroke-width="2"/></svg>
    <i class="abs" style="left:360px;top:8px;width:1px;height:17px;background:#222"></i>
    <svg class="abs" style="left:368px;top:8px" width="16" height="16" viewBox="0 0 16 16"><path d="M2.500 8h11M8 2.500v11" stroke="#f0f0f0" stroke-width="2"/></svg>
    <div class="abs" style="left:394px;top:4px;width:145px;height:24px;border:1px solid #2a2a2a;border-radius:2px;background:#434343;color:#f0f0f0;font-size:12px;line-height:22px;padding-left:7px">Otomatik yakınlaştır<svg class="abs" style="left:127px;top:6px" width="8" height="12" viewBox="0 0 8 12"><path d="M1 4.500l3-3.500 3 3.500zM1 7.500l3 3.500 3-3.500z" fill="#f0f0f0"/></svg></div>
    <svg class="abs" style="left:624px;top:8px" width="17" height="16" viewBox="0 0 17 16"><path d="M4 1h9v4H4zM1 5.500h15v7h-3v-3H4v3H1zM4.500 10.500h8v4.500h-8z" fill="#8a8a8a"/></svg>
    <svg class="abs" style="left:660px;top:9px" width="13" height="14" viewBox="0 0 13 14"><path d="M0 0h9.500L13 3.500V14H0z" fill="#8a8a8a"/><path d="M5 4h3v3.500h2.500L6.500 12 2.500 7.500H5z" fill="#3d3d3d"/></svg>
    <svg class="abs" style="left:697px;top:9px" width="9" height="14" viewBox="0 0 9 14"><path d="M0 0h9v14l-4.500-4.500L0 14z" fill="#ececec"/></svg>
    <i class="abs" style="left:721px;top:8px;width:1px;height:17px;background:#222"></i>
    <svg class="abs" style="left:734px;top:9px" width="16" height="14" viewBox="0 0 16 14"><path d="M1.500 1.500l5.500 5.500L1.500 12.500M8 1.500L13.500 7l-5.500 5.500" fill="none" stroke="#f0f0f0" stroke-width="2.600"/></svg>
   </div>
   <div class="abs" style="left:0;top:33px;width:20px;height:12px;background:#404040"></div>
   <div class="abs" style="left:20px;top:33px;width:705px;height:12px;background:#fff;overflow:hidden"><div class="abs" style="left:634px;top:14px;font-weight:bold;font-size:56px;line-height:56px;color:#a6a6a6;transform:rotate(-30deg);transform-origin:0 0;white-space:nowrap">ek</div></div>
   <div class="abs" style="left:725px;top:33px;width:19px;height:12px;background:#404040"></div>
   <div class="abs" style="left:744px;top:33px;width:18px;height:12px;background:#f1f1f1"><svg class="abs" style="left:5px;top:6px" width="9" height="7" viewBox="0 0 9 7"><path d="M1 5.500l3.500-3.500L8 5.500" fill="none" stroke="#505050" stroke-width="2"/></svg></div>
   
 </div>
</div>
<!-- main scrollbar -->
<div id="sb"><svg class="abs" style="left:3px;top:6px" width="9" height="7" viewBox="0 0 9 7"><path d="M1 5.500l3.500-3.500L8 5.500" fill="none" stroke="#505050" stroke-width="2"/></svg>
 <div class="abs" style="left:0;top:17px;width:15px;height:372px;background:#cdcdcd"></div>
 <svg class="abs" style="left:3px;top:764px" width="9" height="7" viewBox="0 0 9 7"><path d="M1 1.500l3.500 3.500L8 1.500" fill="none" stroke="#505050" stroke-width="2"/></svg>
</div>

</body>
</html>
